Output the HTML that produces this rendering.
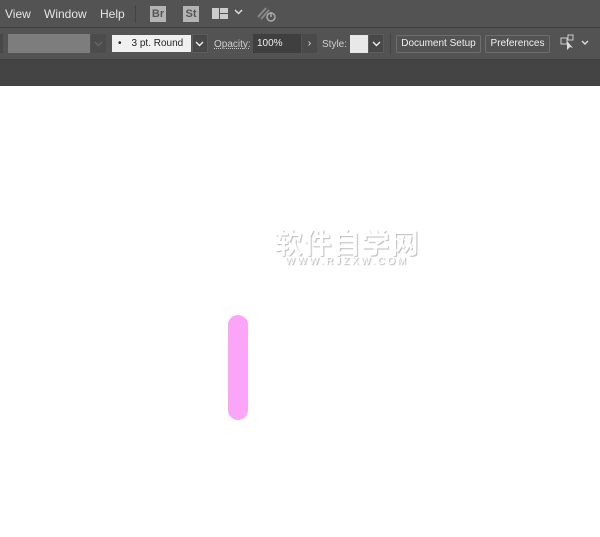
<!DOCTYPE html>
<html><head><meta charset="utf-8"><style>
*{margin:0;padding:0;box-sizing:border-box}
body{width:600px;height:537px;background:#fff;font-family:"Liberation Sans",Arial,sans-serif;position:relative;overflow:hidden}
.a{position:absolute}
#menu{left:0;top:0;width:600px;height:27px;background:#535353}
#sep1{left:0;top:27px;width:600px;height:1px;background:#3f3f3f}
#tool{left:0;top:28px;width:600px;height:31px;background:#535353}
#sep2{left:0;top:59px;width:600px;height:1px;background:#3e3e3e}
#dark{left:0;top:60px;width:600px;height:26px;background:#444}
.m{color:#e6e6e6;font-size:12px;top:7px}
.badge{background:#b4b4b4;color:#555;font-size:11px;font-weight:bold;text-align:center;line-height:16px;width:16px;height:16px;top:6px}
.btn{border:1px solid #6e6e6e;border-radius:2px;color:#f0f0f0;font-size:10px;text-align:center;line-height:16px;height:18px;top:35px}
.lbl{color:#cfcfcf;font-size:10px;top:39px}
</style></head><body>
<div id="menu" class="a"></div><div id="sep1" class="a"></div>
<div id="tool" class="a"></div><div id="sep2" class="a"></div><div id="dark" class="a"></div>
<div class="a m" style="left:5px">View</div>
<div class="a m" style="left:44px">Window</div>
<div class="a m" style="left:100px">Help</div>
<div class="a" style="left:135px;top:5px;width:1px;height:18px;background:#444"></div>
<div class="a badge" style="left:150px">Br</div>
<div class="a badge" style="left:183px">St</div>
<div class="a" style="left:212px;top:8px;width:7px;height:11px;background:#ccc"></div>
<div class="a" style="left:220px;top:8px;width:8px;height:5px;background:#ccc"></div>
<div class="a" style="left:220px;top:14px;width:8px;height:5px;background:#ccc"></div>
<svg class="a" style="left:234px;top:9px" width="9" height="6"><path d="M1 1L4.5 4.5L8 1" stroke="#ddd" stroke-width="1.5" fill="none"/></svg>
<svg class="a" style="left:256px;top:5px" width="22" height="18"><path d="M2 12L10 3M5 14L13 5" stroke="#888" stroke-width="2"/><circle cx="15" cy="12" r="4" stroke="#aaa" stroke-width="1.5" fill="none"/><path d="M15 7v5" stroke="#aaa" stroke-width="1.5"/></svg>
<div class="a" style="left:0;top:34px;width:3px;height:19px;background:#484848"></div>
<div class="a" style="left:8px;top:34px;width:82px;height:19px;background:#7d7d7d"></div>
<div class="a" style="left:91px;top:34px;width:15px;height:19px;background:#4c4c4c"></div>
<svg class="a" style="left:94px;top:41px" width="9" height="6"><path d="M1 1L4.5 4.5L8 1" stroke="#6a6a6a" stroke-width="1.2" fill="none"/></svg>
<div class="a" style="left:112px;top:35px;width:79px;height:17px;background:#f0f0f0;font-size:10px;line-height:17px;color:#222"><span style="margin-left:6px">•</span><span style="margin-left:10px">3 pt. Round</span></div>
<div class="a" style="left:192px;top:34px;width:16px;height:19px;background:#484848;border:1px solid #5c5c5c"></div>
<svg class="a" style="left:195px;top:41px" width="9" height="6"><path d="M1 1L4.5 4.5L8 1" stroke="#eee" stroke-width="1.4" fill="none"/></svg>
<div class="a lbl" style="left:214px;text-decoration:underline dotted">Opacity:</div>
<div class="a" style="left:253px;top:34px;width:48px;height:19px;background:#3f3f3f;color:#f0f0f0;font-size:10px;line-height:19px;padding-left:4px">100%</div>
<div class="a" style="left:302px;top:34px;width:15px;height:19px;background:#4a4a4a;color:#eee;font-size:10px;line-height:19px;text-align:center">›</div>
<div class="a lbl" style="left:322px">Style:</div>
<div class="a" style="left:350px;top:35px;width:18px;height:18px;background:#e8e8e8"></div>
<div class="a" style="left:368px;top:34px;width:16px;height:19px;background:#484848;border:1px solid #5c5c5c"></div>
<svg class="a" style="left:372px;top:41px" width="9" height="6"><path d="M1 1L4.5 4.5L8 1" stroke="#eee" stroke-width="1.4" fill="none"/></svg>
<div class="a" style="left:390px;top:33px;width:1px;height:22px;background:#444"></div>
<div class="a btn" style="left:396px;width:85px">Document Setup</div>
<div class="a btn" style="left:485px;width:65px">Preferences</div>
<svg class="a" style="left:559px;top:33px" width="32" height="20"><rect x="2" y="5" width="6" height="6" stroke="#ccc" fill="none"/><rect x="9" y="2" width="5" height="5" stroke="#ccc" fill="none"/><path d="M8 8L8 17L11 14L14 15Z" fill="#ddd"/><path d="M23 8L26 11L29 8" stroke="#ddd" stroke-width="1.4" fill="none"/></svg>
<div class="a" style="left:272px;top:227px;width:150px;text-align:center;font-family:'Noto Sans CJK SC',sans-serif;font-size:28px;font-weight:bold;color:#fff;letter-spacing:1px;text-shadow:1px 1px 1px #bbb;line-height:30px;white-space:nowrap">软件自学网</div>
<div class="a" style="left:272px;top:256px;width:150px;text-align:center;font-size:10px;color:#fff;letter-spacing:2.5px;text-shadow:1px 1px 1px #aaa;white-space:nowrap">WWW.RJZXW.COM</div>
<div class="a" style="left:228px;top:315px;width:20px;height:105px;border-radius:10px;background:#fba5f8"></div>
</body></html>
